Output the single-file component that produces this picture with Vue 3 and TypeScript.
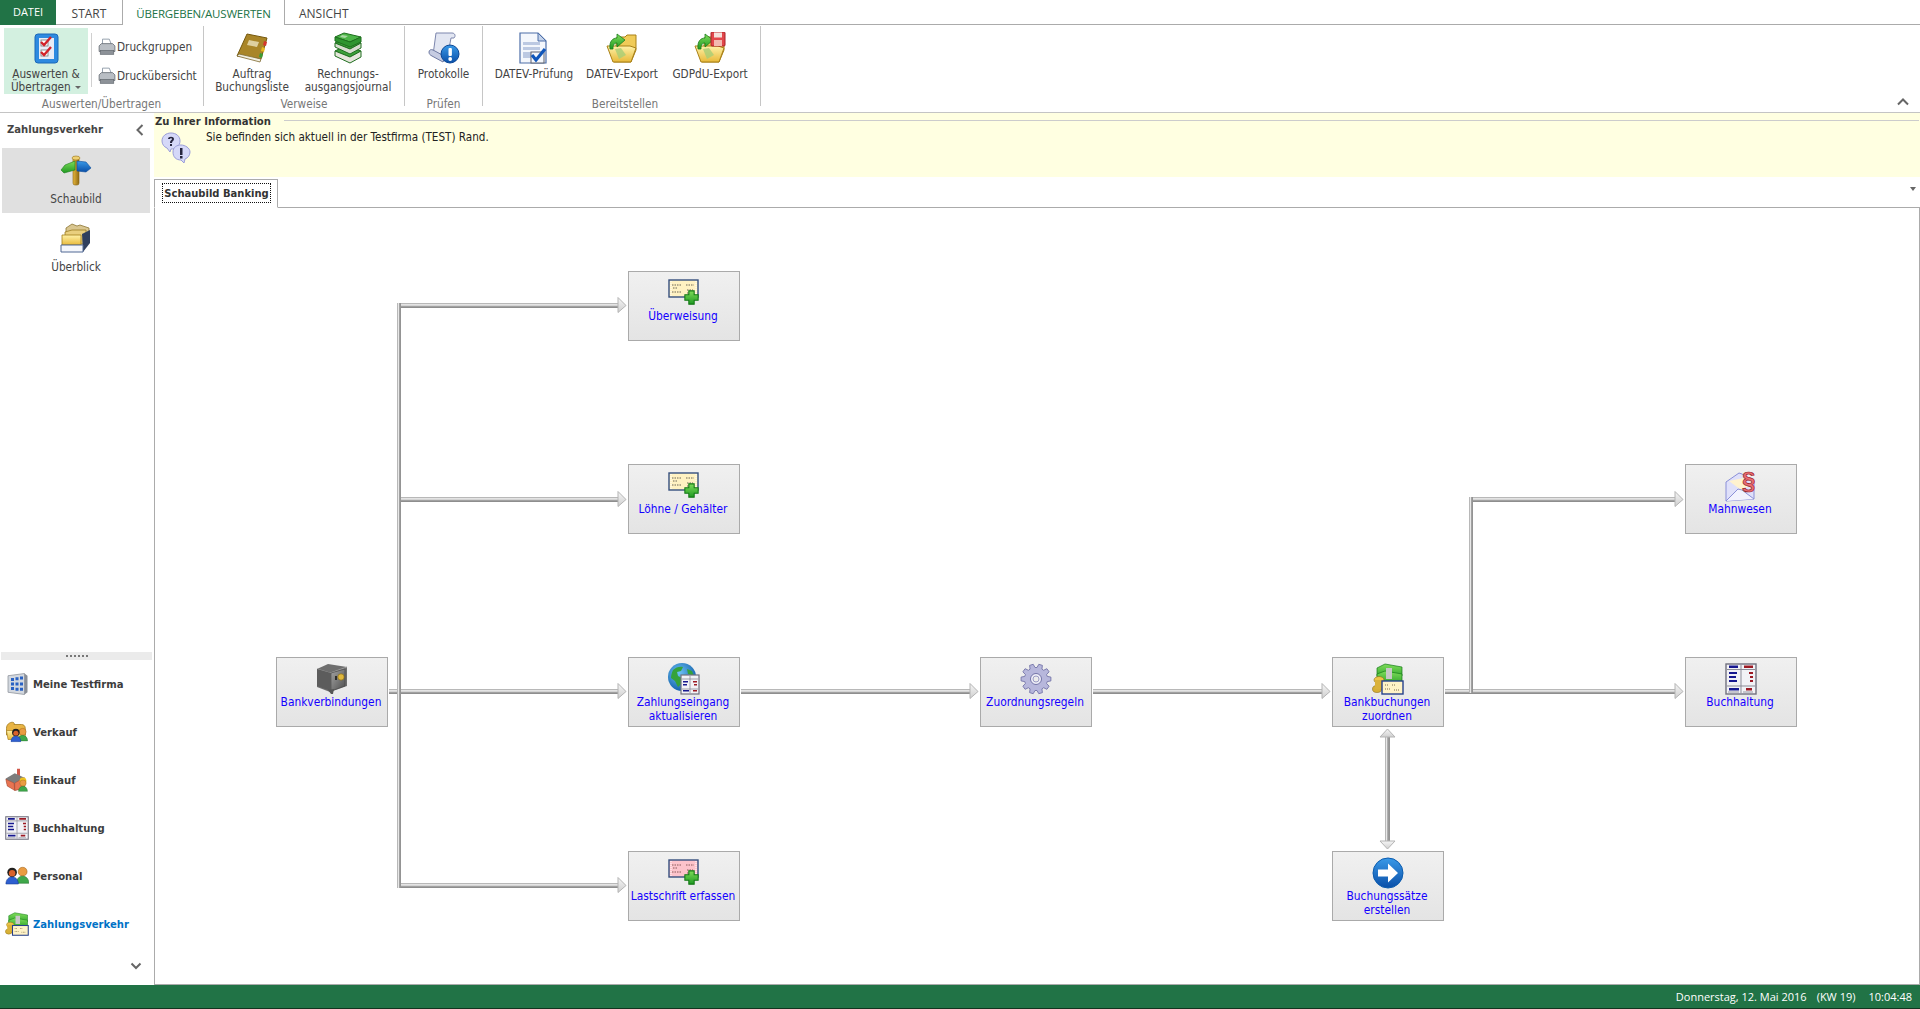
<script setup lang="ts">
interface FlowNode { x: number; y: number; icon: string; lines: string[] }
interface Pipe { x: number; y: number; w: number; h: number }

const ribbonGroups = [
  { label: 'Verweise', pad: 0, buttons: [
    { icon: 'i-book', lines: ['Auftrag', 'Buchungsliste'], w: 96 },
    { icon: 'i-books', lines: ['Rechnungs-', 'ausgangsjournal'], w: 96 },
  ], width: 201 },
  { label: 'Prüfen', pad: 0, buttons: [
    { icon: 'i-scroll', lines: ['Protokolle'], w: 77 },
  ], width: 78 },
  { label: 'Bereitstellen', pad: 7, buttons: [
    { icon: 'i-doccheck', lines: ['DATEV-Prüfung'], w: 88 },
    { icon: 'i-folder', lines: ['DATEV-Export'], w: 88 },
    { icon: 'i-folderdisk', lines: ['GDPdU-Export'], w: 88 },
  ], width: 278 },
]

const modules = [
  { icon: 'i-building', label: 'Meine Testfirma' },
  { icon: 'i-sales', label: 'Verkauf' },
  { icon: 'i-factory', label: 'Einkauf' },
  { icon: 'i-ledger', label: 'Buchhaltung' },
  { icon: 'i-people', label: 'Personal' },
  { icon: 'i-money', label: 'Zahlungsverkehr', active: true },
]

const nodes: FlowNode[] = [
  { x: 473, y: 63, icon: 'i-formplus', lines: ['Überweisung'] },
  { x: 473, y: 256, icon: 'i-formplus', lines: ['Löhne / Gehälter'] },
  { x: 121, y: 449, icon: 'i-safe', lines: ['Bankverbindungen'] },
  { x: 473, y: 449, icon: 'i-globe', lines: ['Zahlungseingang', 'aktualisieren'] },
  { x: 825, y: 449, icon: 'i-gear', lines: ['Zuordnungsregeln'] },
  { x: 1177, y: 449, icon: 'i-money', lines: ['Bankbuchungen', 'zuordnen'] },
  { x: 473, y: 643, icon: 'i-formpink', lines: ['Lastschrift erfassen'] },
  { x: 1177, y: 643, icon: 'i-arrow', lines: ['Buchungssätze', 'erstellen'] },
  { x: 1530, y: 256, icon: 'i-mail', lines: ['Mahnwesen'] },
  { x: 1530, y: 449, icon: 'i-ledger', lines: ['Buchhaltung'] },
]

const hPipes: Pipe[] = [
  { x: 242, y: 95, w: 222, h: 5 },
  { x: 245, y: 289, w: 219, h: 5 },
  { x: 234, y: 481, w: 230, h: 5 },
  { x: 242, y: 675, w: 222, h: 5 },
  { x: 586, y: 481, w: 230, h: 5 },
  { x: 938, y: 481, w: 230, h: 5 },
  { x: 1290, y: 481, w: 231, h: 5 },
  { x: 1314, y: 289, w: 207, h: 5 },
]
const vPipes: Pipe[] = [
  { x: 242, y: 95, w: 4, h: 585 },
  { x: 1314, y: 289, w: 4, h: 196 },
  { x: 1230, y: 528, w: 5, h: 106 },
]

const arrowsRight = [
  [463, 97], [463, 291], [463, 483], [463, 677],
  [815, 483], [1167, 483], [1520, 291], [1520, 483],
]
const rightHead = (p: number[]) =>
  `${p[0]},${p[1] - 7.5} ${p[0] + 8},${p[1] + 0.5} ${p[0]},${p[1] + 7.5}`

function gearPath(teeth: number, outer: number, inner: number): string {
  const pts: string[] = []
  const step = (Math.PI * 2) / teeth
  for (let i = 0; i < teeth; i++) {
    const a = i * step
    const add = (r: number, d: number) => {
      pts.push(`${(16 + r * Math.cos(a + d)).toFixed(1)} ${(16 + r * Math.sin(a + d)).toFixed(1)}`)
    }
    add(inner, -step * 0.36)
    add(outer, -step * 0.2)
    add(outer, step * 0.2)
    add(inner, step * 0.36)
  }
  return 'M' + pts.join('L') + 'Z'
}
const gear = gearPath(10, 15, 11.5)
</script>

<template>
  <svg class="icon-defs" aria-hidden="true">
    <defs>
      <linearGradient id="pipe-h" x1="0" y1="0" x2="0" y2="1">
        <stop offset="0" stop-color="#b8b8b8" /><stop offset=".2" stop-color="#b8b8b8" />
        <stop offset=".2" stop-color="#e4e4e4" /><stop offset=".45" stop-color="#e4e4e4" />
        <stop offset=".6" stop-color="#b4b4b4" /><stop offset=".8" stop-color="#8e8e8e" />
        <stop offset="1" stop-color="#8e8e8e" />
      </linearGradient>
      <linearGradient id="pipe-v" x1="0" y1="0" x2="1" y2="0">
        <stop offset="0" stop-color="#b8b8b8" /><stop offset=".25" stop-color="#b8b8b8" />
        <stop offset=".25" stop-color="#e8e8e8" /><stop offset=".5" stop-color="#e8e8e8" />
        <stop offset=".5" stop-color="#b0b0b0" /><stop offset=".75" stop-color="#949494" />
        <stop offset="1" stop-color="#949494" />
      </linearGradient>
      <linearGradient id="head" x1="0" y1="0" x2="0" y2="1">
        <stop offset="0" stop-color="#f6f6f6" /><stop offset="1" stop-color="#cfcfcf" />
      </linearGradient>
      <linearGradient id="yellow" x1="0" y1="0" x2="0" y2="1">
        <stop offset="0" stop-color="#fff2a8" /><stop offset="1" stop-color="#e8b93a" />
      </linearGradient>
      <linearGradient id="gold" x1="0" y1="0" x2="1" y2="0">
        <stop offset="0" stop-color="#e8b73c" /><stop offset="1" stop-color="#8f6a14" />
      </linearGradient>
      <linearGradient id="green" x1="0" y1="0" x2="0" y2="1">
        <stop offset="0" stop-color="#7fdc5a" /><stop offset="1" stop-color="#1f9a22" />
      </linearGradient>
      <linearGradient id="blue" x1="0" y1="0" x2="0" y2="1">
        <stop offset="0" stop-color="#3a9ae8" /><stop offset="1" stop-color="#0a4fa8" />
      </linearGradient>
      <linearGradient id="grey" x1="0" y1="0" x2="1" y2="1">
        <stop offset="0" stop-color="#a4a4a4" /><stop offset="1" stop-color="#4e4e4e" />
      </linearGradient>
      <radialGradient id="globe" cx=".4" cy=".35" r=".7">
        <stop offset="0" stop-color="#6ec3f5" /><stop offset="1" stop-color="#0d5ba8" />
      </radialGradient>
    </defs>

    <symbol id="i-checks" viewBox="0 0 32 32">
      <rect x="5" y="2" width="23" height="29" rx="3" fill="#2d8ae0" stroke="#1b68b8" />
      <rect x="9" y="6" width="15" height="21" fill="#e8ecf6" />
      <rect x="11" y="8" width="7" height="6" fill="#fff" stroke="#777" stroke-width=".8" />
      <rect x="11" y="18" width="7" height="6" fill="#fff" stroke="#777" stroke-width=".8" />
      <path d="M11 10l3 3 7-8M11 20l3 3 7-8" fill="none" stroke="#d3232a" stroke-width="2.4" />
    </symbol>
    <symbol id="i-printer" viewBox="0 0 16 16">
      <path d="M4 1h6l2 5H4z" fill="#fff" stroke="#8b97a6" stroke-width=".8" />
      <path d="M1 7l2-2h10l2 2v5H1z" fill="#b9bec4" stroke="#6e747c" stroke-width=".8" />
      <rect x="2" y="11" width="12" height="3.5" fill="#8d9298" stroke="#62676e" stroke-width=".6" />
    </symbol>
    <symbol id="i-book" viewBox="0 0 32 32">
      <path d="M1 24L11 2l20 4-6 21z" fill="#a98528" stroke="#75590f" />
      <path d="M1 24l23 6 1-3-22-5z" fill="#f2efe2" stroke="#7d6a30" stroke-width=".8" />
      <path d="M13 8l10 2-2 5-10-2z" fill="#ded0a0" />
      <path d="M28 9l3 1-1 4-3-1z" fill="#d5372b" />
      <path d="M26 15l3 1-1 4-3-1z" fill="#e7b91f" />
      <path d="M24 21l3 1-1 4-3-1z" fill="#3a9c35" />
    </symbol>
    <symbol id="i-books" viewBox="0 0 32 32">
      <path d="M3 19l10-5 16 5-11 6z" fill="#3da13a" stroke="#1f6f1f" />
      <path d="M3 19v5l15 7 11-6v-6l-11 6z" fill="#e6e6dc" stroke="#1f6f1f" />
      <path d="M3 11l10-5 16 5-11 6z" fill="#3da13a" stroke="#1f6f1f" />
      <path d="M3 11v4l15 7 11-6v-5l-11 6z" fill="#d7dccf" stroke="#1f6f1f" />
      <path d="M3 5l9-4 17 4-11 5z" fill="#4cb548" stroke="#1f6f1f" />
      <path d="M3 5v4l15 6 11-5V5l-11 5z" fill="#2f9530" stroke="#1f6f1f" />
      <path d="M10 3l6 1-3 2-5-1z" fill="#a9d8a2" />
    </symbol>
    <symbol id="i-scroll" viewBox="0 0 32 32">
      <path d="M8 1h16c3 0 4 3 2 5h-3l-3 16-9 4-6-3z" fill="#e2e6f2" stroke="#7c86ad" />
      <path d="M1 20c0-2 2-3 4-2l13 7-3 5-11-6c-2-1-3-2-3-4z" fill="#c6cce2" stroke="#6f7aa2" />
      <circle cx="22" cy="22" r="9" fill="url(#blue)" stroke="#0a4796" />
      <rect x="20.5" y="16" width="3.4" height="8" rx="1" fill="#fff" />
      <circle cx="22.2" cy="27" r="1.9" fill="#fff" />
    </symbol>
    <symbol id="i-doccheck" viewBox="0 0 32 32">
      <path d="M2 1h18l8 8v22H2z" fill="#f4f7fc" stroke="#4d6ea8" stroke-width="1.2" />
      <path d="M20 1v8h8z" fill="#c3d2ea" stroke="#4d6ea8" />
      <rect x="5" y="10" width="17" height="3" fill="#bcc9e2" />
      <rect x="5" y="15" width="17" height="3" fill="#bcc9e2" />
      <rect x="5" y="20" width="8" height="6" fill="#bcc9e2" />
      <rect x="13" y="20" width="13" height="11" fill="#f4f7fc" stroke="#5a5f6c" />
      <path d="M14 23l4 5 9-11" fill="none" stroke="#0f56bb" stroke-width="3.2" />
    </symbol>
    <symbol id="i-folder" viewBox="0 0 32 32">
      <path d="M11 5h8l2-2h9v15l-5 12H8z" fill="#f0cb58" stroke="#a98118" />
      <path d="M1 14h23l6 2-5 14H7z" fill="url(#yellow)" stroke="#a98118" />
      <path d="M9 17l6-1 5 7-7 4z" fill="#a7cd76" opacity=".8" />
      <path d="M4 17C3 9 7 6 11 6V2l8 6-8 7v-4c-3 0-4 2-4 6z" fill="url(#green)" stroke="#1a7c1d" stroke-width=".8" />
    </symbol>
    <symbol id="i-folderdisk" viewBox="0 0 32 32">
      <use href="#i-folder" width="32" height="32" />
      <rect x="17" y="0" width="14" height="14" rx="1" fill="#e2474b" stroke="#a82328" />
      <rect x="20" y="0.5" width="8" height="5" fill="#f5e2dc" />
      <rect x="20" y="8" width="8" height="6" fill="#f3b9b0" />
    </symbol>
    <symbol id="i-post" viewBox="0 0 32 32">
      <rect x="13" y="2" width="6" height="28" rx="2" fill="url(#gold)" stroke="#8a6510" stroke-width=".6" />
      <ellipse cx="16" cy="3" rx="4" ry="2" fill="#eed072" stroke="#9a7418" stroke-width=".6" />
      <path d="M15 6L5 10 1 15l3 3 11-3z" fill="url(#green)" stroke="#1b7c1d" stroke-width=".6" />
      <path d="M17 6l9 1 5 6-5 4-9-1z" fill="url(#blue)" stroke="#0a4b9b" stroke-width=".6" />
    </symbol>
    <symbol id="i-stack" viewBox="0 0 32 32">
      <path d="M6 7l6-4 5 2 3-1 9 3v14H6z" fill="#d9c690" stroke="#8d7633" stroke-width=".8" />
      <path d="M5 11l7-2h14v14H5z" fill="#e9cf7e" stroke="#9d7f23" stroke-width=".8" />
      <path d="M2 14h19v10H2z" fill="url(#yellow)" stroke="#a27d17" stroke-width=".8" />
      <path d="M22 13l8-4v13l-7 9z" fill="#30405e" />
      <path d="M1 24h22v7H1z" fill="#f4f6fb" stroke="#506894" />
    </symbol>
    <symbol id="i-building" viewBox="0 0 32 32">
      <path d="M4 5l22-3v28L4 27z" fill="#d3d8df" stroke="#8b9098" />
      <path d="M26 2l4 3v22l-4 3z" fill="#8a8f97" />
      <path d="M8 8h4v4H8zm6-1h4v4h-4zm6-1h4v4h-4zM8 14h4v4H8zm6 0h4v4h-4zm6 0h4v4h-4zM8 20h4v4H8zm6 1h4v4h-4zm6 0h4v4h-4z" fill="#2a62c4" />
    </symbol>
    <symbol id="i-bust" viewBox="0 0 16 20">
      <circle cx="8" cy="6" r="5" fill="#e99c42" stroke="#9a5f14" stroke-width=".6" />
      <path d="M1 19c0-5 3-8 7-8s7 3 7 8z" fill="#3fa84a" stroke="#1f6d2a" stroke-width=".6" />
    </symbol>
    <symbol id="i-bustdark" viewBox="0 0 16 20">
      <circle cx="8" cy="6" r="5.4" fill="#22201e" />
      <circle cx="8" cy="7" r="3.6" fill="#d9622c" />
      <path d="M1 19c0-5 3-8 7-8s7 3 7 8z" fill="#2e5fd0" stroke="#153a8d" stroke-width=".6" />
    </symbol>
    <symbol id="i-sales" viewBox="0 0 32 32">
      <path d="M2 11c0-5 4-8 8-8 2 0 3 2 2 3h10c3 0 5 2 5 5v9H2z" fill="#e8b444" stroke="#9d7518" />
      <path d="M2 14h25v12H4z" fill="url(#yellow)" stroke="#9d7518" stroke-width=".8" />
      <use href="#i-bust" x="16" y="10" width="15" height="19" />
      <use href="#i-bustdark" x="7" y="11" width="15" height="19" />
    </symbol>
    <symbol id="i-factory" viewBox="0 0 32 32">
      <rect x="16" y="1" width="4" height="12" fill="#d0584a" />
      <path d="M1 14l12-7 13 6v14l-12 3L3 24z" fill="#7c7c7c" />
      <path d="M1 15l11 5 1 10-10-6zM13 20l13-7v14l-13 3z" fill="#e77452" stroke="#a8442b" stroke-width=".6" />
      <circle cx="24" cy="17" r="4.5" fill="#f0c41e" />
      <use href="#i-bust" x="17" y="15" width="14" height="17" />
    </symbol>
    <symbol id="i-ledger" viewBox="0 0 32 32">
      <rect x="1" y="1" width="30" height="30" fill="#f2f2f6" stroke="#71717f" stroke-width="1.4" />
      <path d="M16 2v28M2 6.5h28M2 23h28" stroke="#8b8b97" />
      <path d="M4 2.500h9V5H4zM4 25h10v2.400H4z" fill="#17188f" />
      <path d="M19 2.500h9V5h-9zM21 25h6v2.400h-6z" fill="#9c1a24" />
      <path d="M4 9h8v2H4zM4 13h7v2H4zM4 17h8v2H4z" fill="#17188f" />
      <path d="M24 9h4v2h-4zM25 13h3v2h-3zM25 17h3v2h-3z" fill="#9c1a24" />
      <path d="M3 29h11M18 29h10" stroke="#9a9aa4" />
    </symbol>
    <symbol id="i-people" viewBox="0 0 32 32">
      <use href="#i-bust" x="14" y="3" width="19" height="24" />
      <use href="#i-bustdark" x="0" y="4" width="19" height="24" />
    </symbol>
    <symbol id="i-money" viewBox="0 0 32 32">
      <path d="M5 5l8-4 17 3v9l-9 4-16-4z" fill="url(#green)" stroke="#147a18" stroke-width=".7" />
      <path d="M5 11l8-3 17 3v8l-9 4-16-4z" fill="url(#green)" stroke="#147a18" stroke-width=".7" />
      <rect x="14" y="5" width="6" height="11" fill="#c7c7c7" />
      <ellipse cx="5" cy="26" rx="4.500" ry="3.500" fill="#d7b035" stroke="#8d6d14" stroke-width=".6" />
      <ellipse cx="7" cy="17" rx="5" ry="3.500" fill="#ecc549" stroke="#8d6d14" stroke-width=".6" />
      <rect x="3" y="17" width="8" height="9" fill="#dab23a" />
      <rect x="10" y="18" width="21" height="13" fill="#fff3c7" stroke="#26408c" stroke-width="1.4" />
      <path d="M13 22h4M20 22h3M13 26h6M22 27h5" stroke="#7b6c4a" stroke-dasharray="1 1" />
    </symbol>
    <symbol id="i-safe" viewBox="0 0 32 32">
      <path d="M1 6l11-5 19 3v19l-17 6-13-5z" fill="#6e6e6e" />
      <path d="M1 6l13 4 17-6" fill="none" stroke="#9c9c9c" />
      <path d="M15 10l14-4v17l-14 5z" fill="url(#grey)" stroke="#444" stroke-width=".6" />
      <path d="M1 6l14 4v18L1 23z" fill="#5c5c5c" />
      <circle cx="25" cy="14" r="3.200" fill="#e0b83d" stroke="#7b5f10" stroke-width=".6" />
      <rect x="19" y="13" width="2" height="4" fill="#2d2d2d" />
      <path d="M12 27l3 4 2 0 1-5z" fill="#555" />
    </symbol>
    <symbol id="i-formyellow" viewBox="0 0 32 32">
      <rect x="1" y="3" width="29" height="17" fill="#fff2c2" stroke="#36507f" stroke-width="1.4" />
      <path d="M4 8h10M18 8h8M5 11h5M19 13h6M4 15h10M19 16h7" stroke="#6d6757" stroke-dasharray="1.500 1" />
      <path d="M3 4v15M28 4v15" stroke="#fff" stroke-dasharray="1 1" />
    </symbol>
    <symbol id="i-formpinkbase" viewBox="0 0 32 32">
      <rect x="1" y="3" width="29" height="17" fill="#fdc3cb" stroke="#36507f" stroke-width="1.4" />
      <path d="M4 8h10M18 8h8M5 11h5M19 13h6M4 15h10M19 16h7" stroke="#8a5a5a" stroke-dasharray="1.500 1" />
      <path d="M3 4v15M28 4v15" stroke="#fff" stroke-dasharray="1 1" />
    </symbol>
    <symbol id="i-plus" viewBox="0 0 14 14">
      <path d="M4.500 .8h5v3.700h3.700v5H9.500v3.700h-5V9.500H.8v-5h3.700z" fill="url(#green)" stroke="#157a17" stroke-width="1" />
    </symbol>
    <symbol id="i-formplus" viewBox="0 0 32 32">
      <use href="#i-formyellow" width="32" height="32" />
      <use href="#i-plus" x="16" y="13" width="15" height="15" />
    </symbol>
    <symbol id="i-formpink" viewBox="0 0 32 32">
      <use href="#i-formpinkbase" width="32" height="32" />
      <use href="#i-plus" x="16" y="13" width="15" height="15" />
    </symbol>
    <symbol id="i-globe" viewBox="0 0 32 32">
      <circle cx="14" cy="14" r="14" fill="url(#globe)" />
      <path d="M5 7c3-3 7-4 10-3l-2 4-4 1 1 4 4 2-1 6-3 3-3-6-4-3c0-3 1-6 2-8zM19 6l5 2 2 5-6-2z" fill="#35a33a" />
      <rect x="13" y="12" width="18" height="19" fill="#f2f2f6" stroke="#71717f" stroke-width="1.2" />
      <path d="M22 13v17M14 16h16M14 26h16" stroke="#8b8b97" stroke-width=".8" />
      <path d="M15 18h5v1.500h-5zM15 21h4v1.500h-4zM15 27h6v1.500h-6z" fill="#17188f" />
      <path d="M25 18h4v1.500h-4zM26 21h3v1.500h-3zM25 27h4v1.500h-4z" fill="#9c1a24" />
    </symbol>
    <symbol id="i-gear" viewBox="0 0 32 32">
      <path :d="gear" fill="#b7b7dc" stroke="#7474a8" stroke-width=".9" />
      <circle cx="16" cy="16" r="5.500" fill="#eeeef8" stroke="#7474a8" />
      <circle cx="16" cy="16" r="3" fill="#ececec" stroke="#9c9cc4" />
    </symbol>
    <symbol id="i-arrow" viewBox="0 0 32 32">
      <circle cx="16" cy="16" r="15" fill="url(#blue)" stroke="#0b5caf" />
      <path d="M6 12.500h10V6.500l10 9.500-10 9.500v-6H6z" fill="#fff" />
    </symbol>
    <symbol id="i-mail" viewBox="0 0 32 32">
      <path d="M1 12L14 3l3 1 12 7v18l-28 2z" fill="#dfe0fa" stroke="#8a8fd8" />
      <path d="M4 11l14-3 6 8-8 4z" fill="#fff2cf" />
      <path d="M1 31l12-12 4 1 12 9" fill="#f2f2fe" stroke="#8a8fd8" />
    </symbol>
    <symbol id="i-info" viewBox="0 0 32 32">
      <path d="M2 9c0-5 4-8 9-8s9 3 9 8-4 8-9 8l-1 3-3-4c-3-1-5-4-5-7z" fill="#d5d8f8" stroke="#9a9dd8" />
      <path d="M13 20c0-5 4-7 8-7s9 3 9 7c0 3-2 6-5 7l-1 4-3-3c-5 0-8-3-8-8z" fill="#d5d8f8" stroke="#9a9dd8" />
      <path d="M8 7c0-3 6-3 6 0 0 2-2 2-2 4h-2c0-3 2-3 2-4s-2-1-2 0zM10 12h2v2h-2zM20 16h2.500v7H20zM20 24h2.500v2.500H20z" fill="#26263e" />
    </symbol>
  </svg>

  <div class="app">
    <!-- Ribbon tabs -->
    <div class="tabs">
      <div class="tab tab-file">DATEI</div>
      <div class="tab tab-start">START</div>
      <div class="tab tab-active">ÜBERGEBEN/AUSWERTEN</div>
      <div class="tab tab-view">ANSICHT</div>
    </div>

    <!-- Ribbon -->
    <div class="ribbon">
      <div class="rgroup rgroup-first">
        <div class="rgroup-row">
          <div class="rbtn rbtn-on">
            <svg class="ico32"><use href="#i-checks" /></svg>
            <span>Auswerten &amp;</span>
            <span>Übertragen <i class="caret"></i></span>
          </div>
          <div class="rsep"></div>
          <div class="rsmall">
            <div class="rsmall-item"><svg class="ico16"><use href="#i-printer" /></svg>Druckgruppen</div>
            <div class="rsmall-item"><svg class="ico16"><use href="#i-printer" /></svg>Druckübersicht</div>
          </div>
        </div>
        <div class="rgroup-label">Auswerten/Übertragen</div>
      </div>
      <div v-for="g in ribbonGroups" :key="g.label" class="rgroup" :style="{ width: g.width + 'px', paddingLeft: g.pad + 'px' }">
        <div class="rgroup-row">
          <div v-for="b in g.buttons" :key="b.icon" class="rbtn" :style="{ width: b.w + 'px' }">
            <svg class="ico32"><use :href="'#' + b.icon" /></svg>
            <span v-for="l in b.lines" :key="l">{{ l }}</span>
          </div>
        </div>
        <div class="rgroup-label">{{ g.label }}</div>
      </div>
      <svg class="collapse" width="12" height="8" viewBox="0 0 12 8"><path d="M1 6.500l5-5 5 5" fill="none" stroke="#666" stroke-width="2" /></svg>
    </div>

    <div class="middle">
      <!-- Left navigation -->
      <aside class="side">
        <div class="side-head">
          <span>Zahlungsverkehr</span>
          <svg width="8" height="12" viewBox="0 0 8 12"><path d="M6.500 1l-5 5 5 5" fill="none" stroke="#666" stroke-width="2" /></svg>
        </div>
        <div class="side-view side-view-on">
          <svg class="ico32"><use href="#i-post" /></svg>
          <span>Schaubild</span>
        </div>
        <div class="side-view">
          <svg class="ico32"><use href="#i-stack" /></svg>
          <span>Überblick</span>
        </div>
        <div class="splitter"><i v-for="n in 6" :key="n"></i></div>
        <div v-for="m in modules" :key="m.label" class="module" :class="{ 'module-on': m.active }">
          <svg class="ico24"><use :href="'#' + m.icon" /></svg>
          <span>{{ m.label }}</span>
        </div>
        <div class="side-more">
          <svg width="12" height="8" viewBox="0 0 12 8"><path d="M1.500 1.500l4.500 4.500 4.500-4.500" fill="none" stroke="#666" stroke-width="2" /></svg>
        </div>
      </aside>

      <main class="main">
        <!-- Info box -->
        <div class="info">
          <div class="info-title"><b>Zu Ihrer Information</b><i></i></div>
          <div class="info-body">
            <svg class="ico32"><use href="#i-info" /></svg>
            <span>Sie befinden sich aktuell in der Testfirma (TEST) Rand.</span>
          </div>
        </div>

        <!-- Document tab strip -->
        <div class="doctabs">
          <div class="doctab"><span>Schaubild Banking</span></div>
          <i class="doctabs-menu"></i>
        </div>

        <!-- Diagram -->
        <div class="canvas">
          <svg class="wires" width="1765" height="777">
            <rect v-for="(p, i) in hPipes" :key="'h' + i" :x="p.x" :y="p.y" :width="p.w" :height="p.h" fill="url(#pipe-h)" />
            <rect v-for="(p, i) in vPipes" :key="'v' + i" :x="p.x" :y="p.y" :width="p.w" :height="p.h" fill="url(#pipe-v)" />
            <polygon v-for="(p, i) in arrowsRight" :key="'a' + i" :points="rightHead(p)" fill="url(#head)" stroke="#b4b4b4" />
            <polygon points="1225,529 1232.500,521 1240,529" fill="url(#head)" stroke="#b4b4b4" />
            <polygon points="1225,633 1232.500,641 1240,633" fill="url(#head)" stroke="#b4b4b4" />
          </svg>
          <div
            v-for="n in nodes"
            :key="n.lines[0]"
            class="node"
            :style="{ left: n.x + 'px', top: n.y + 'px' }"
          >
            <svg class="ico32"><use :href="'#' + n.icon" /></svg>
            <b v-if="n.icon === 'i-mail'" class="para">§</b>
            <span v-for="l in n.lines" :key="l">{{ l }}</span>
          </div>
        </div>
      </main>
    </div>

    <!-- Status bar -->
    <footer class="status">
      <span>Donnerstag, 12. Mai 2016</span>
      <span>(KW 19)</span>
      <span>10:04:48</span>
    </footer>
  </div>
</template>

<style>
html, body { margin: 0; height: 100%; overflow: hidden; background: #fff; }
</style>

<style scoped>
.icon-defs { position: absolute; width: 0; height: 0; }
.app {
  display: flex;
  flex-direction: column;
  width: 1920px;
  height: 1009px;
  font-family: "DejaVu Sans Condensed", "DejaVu Sans", sans-serif;
  font-stretch: condensed;
  font-size: 11.7px;
  color: #444;
  overflow: hidden;
}
.ico16 { width: 18px; height: 18px; flex: none; margin-right: 1px; }
.ico24 { width: 24px; height: 24px; flex: none; }
.ico32 { width: 32px; height: 32px; flex: none; }

/* Tabs */
.tabs {
  display: flex;
  height: 25px;
  box-sizing: border-box;
  border-bottom: 1px solid #ababab;
  font-family: "Open Sans", sans-serif;
  font-stretch: normal;
  font-size: 12px;
  line-height: 28px;
  color: #444;
}
.tab { height: 25px; box-sizing: border-box; padding: 0 13px; }
.tab-file {
  width: 56px;
  padding: 0;
  text-align: center;
  background: #217346;
  color: #fff;
  font-size: 11px;
  line-height: 24px;
}
.tab-start { width: 66px; padding: 0; text-align: center; }
.tab-active {
  width: 163px;
  padding: 0;
  text-align: center;
  color: #217346;
  background: #fff;
  font-size: 11.5px;
  letter-spacing: -0.2px;
  border: 1px solid #ababab;
  border-width: 0 1px;
}
.tab-view { padding-left: 14px; }

/* Ribbon */
.ribbon {
  position: relative;
  display: flex;
  height: 88px;
  box-sizing: border-box;
  border-bottom: 1px solid #c4c4c4;
  padding-top: 1px;
}
.rgroup {
  display: flex;
  flex-direction: column;
  box-sizing: border-box;
  height: 80px;
  border-right: 1px solid #c6c6c6;
  flex: none;
}
.rgroup-first { width: 204px; padding-left: 4px; }
.rgroup-row {
  display: flex;
  flex: none;
  box-sizing: border-box;
  height: 70px;
  align-items: flex-start;
  padding-top: 2px;
}
.rgroup-label { text-align: center; color: #777; line-height: 14px; margin-top: 1px; }
.rgroup-first .rgroup-label { margin-left: -4px; }
.rbtn {
  display: flex;
  flex-direction: column;
  align-items: center;
  box-sizing: border-box;
  line-height: 13px;
  padding-top: 4px;
  flex: none;
  white-space: nowrap;
}
.rbtn .ico32 { margin-bottom: 4px; }
.rbtn-on { width: 84px; background: #d3f0e0; height: 66px; }
.caret {
  display: inline-block;
  width: 0;
  height: 0;
  margin: 0 0 2px 1px;
  border: 3px solid transparent;
  border-top-color: #666;
  border-bottom-width: 0;
}
.rsep { width: 1px; height: 54px; margin: 5px 6px 0 3px; background: #d0d0d0; }
.rsmall { display: flex; flex-direction: column; gap: 11px; padding-top: 10px; }
.rsmall-item { display: flex; align-items: center; height: 18px; white-space: nowrap; }
.collapse { position: absolute; right: 11px; bottom: 6px; }

.middle { display: flex; flex: 1; min-height: 0; }

/* Side navigation */
.side {
  display: flex;
  flex-direction: column;
  width: 154px;
  flex: none;
  box-sizing: border-box;
  height: 872px;
}
.side-head {
  display: flex;
  align-items: center;
  justify-content: space-between;
  height: 33px;
  margin-bottom: 2px;
  padding: 0 10px 0 7px;
  font-size: 11.2px;
  font-weight: 700;
  color: #444;
}
.side-view {
  display: flex;
  flex-direction: column;
  align-items: center;
  height: 65px;
  width: 148px;
  margin-left: 2px;
  padding-top: 7px;
  box-sizing: border-box;
  line-height: 14px;
}
.side-view .ico32 { margin-bottom: 5px; }
.side-view-on { background: #e0e0e0; }
.side-view + .side-view { padding-top: 8px; margin-bottom: 374px; }
.side-view + .side-view .ico32 { margin-bottom: 7px; }
.splitter {
  display: flex;
  gap: 2px;
  align-items: center;
  justify-content: center;
  width: 151px;
  height: 8px;
  margin-left: 1px;
  background: #ebebeb;
  flex: none;
}
.splitter i { width: 2px; height: 2px; background: #777; }
.module {
  display: flex;
  align-items: center;
  gap: 4px;
  height: 48px;
  padding-left: 5px;
  font-size: 11.2px;
  font-weight: 700;
  color: #3c3c3c;
  flex: none;
}
.module-on { color: #0072c6; }
.side-more { display: flex; justify-content: flex-end; padding: 14px 12px 0 0; }

/* Main */
.main { display: flex; flex-direction: column; flex: 1; min-width: 0; }
.info {
  height: 64px;
  background: #ffffe1;
  flex: none;
  color: #222;
}
.info-title {
  display: flex;
  align-items: center;
  height: 16px;
  padding-left: 1px;
  color: #333;
  font-size: 11.2px;
}
.info-title i { flex: 1; height: 1px; background: #ccc; margin: 0 1px 0 13px; position: relative; top: -1px; }
.info-body { display: flex; gap: 14px; padding-left: 6px; margin-top: 3px; line-height: 14px; font-size: 11.6px; }
.info-body span { margin-top: -2px; }
.doctabs {
  position: relative;
  display: flex;
  align-items: flex-end;
  height: 31px;
  box-sizing: border-box;
  border-bottom: 1px solid #ababab;
  flex: none;
}
.doctab {
  width: 124px;
  height: 29px;
  margin-bottom: -1px;
  box-sizing: border-box;
  border: 1px solid #ababab;
  border-bottom-color: #fff;
  background: #fff;
  padding: 3px 0 0 7px;
  font-size: 11.1px;
  font-weight: 700;
  color: #333;
}
.doctab span {
  display: block;
  width: 109px;
  height: 20px;
  box-sizing: border-box;
  border: 1px dotted #111;
  line-height: 20px;
  text-align: center;
  white-space: nowrap;
}
.doctabs-menu {
  position: absolute;
  right: 4px;
  top: 10px;
  border: 3px solid transparent;
  border-top: 4px solid #666;
  border-bottom-width: 0;
}
.canvas {
  position: relative;
  flex: 1;
  min-height: 0;
  box-sizing: border-box;
  border: 1px solid #ababab;
  border-top: 0;
  margin-left: 0;
}
.wires { position: absolute; left: 0; top: 0; }
.node {
  position: absolute;
  display: flex;
  flex-direction: column;
  align-items: center;
  width: 112px;
  height: 70px;
  box-sizing: border-box;
  padding-top: 5px;
  border: 1px solid #aaa;
  background: linear-gradient(#f0f0f0, #e4e4e4);
  color: #1400ff;
  font-size: 11.85px;
  line-height: 14px;
  white-space: nowrap;
}
.node span { margin-right: 2px; }
.para {
  position: absolute;
  left: 56px;
  top: 3px;
  font-family: "Liberation Sans", sans-serif;
  font-size: 24px;
  line-height: 26px;
  color: #ea6d72;
  -webkit-text-stroke: 0.7px #96242a;
}

/* Status bar */
.status {
  display: flex;
  justify-content: flex-end;
  align-items: center;
  gap: 10px;
  height: 24px;
  box-sizing: border-box;
  flex: none;
  padding: 0 8px 0 0;
  background: #217346;
  border-bottom: 1px solid #12351f;
  color: #fff;
  font-family: "Open Sans", sans-serif;
  font-stretch: normal;
  font-size: 11px;
}
.status span:last-child { margin-left: 3px; }
</style>
